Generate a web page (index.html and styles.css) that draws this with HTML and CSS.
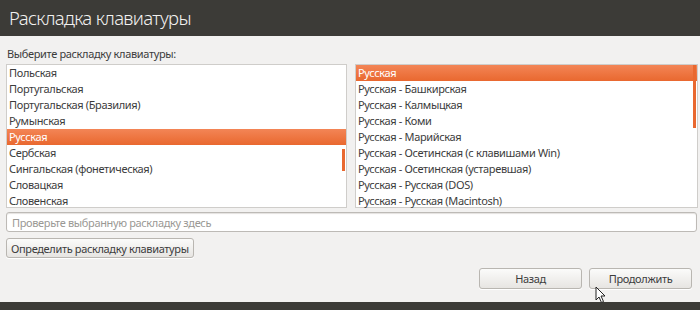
FILE: index.html
```html
<!DOCTYPE html>
<html>
    <head>
        <meta charset='UTF-8'>
        <link rel="stylesheet" href="styles.css">
    </head>
    <body>
        <header class="title-bar">Раскладка клавиатуры</header>
        <main class="page">
            <div class="caption">Выберите раскладку клавиатуры:</div>
            <div class="lists">
                <div class="list">
                    <div class="rows">
                        <div class="row">Польская</div>
                        <div class="row">Португальская</div>
                        <div class="row">Португальская (Бразилия)</div>
                        <div class="row">Румынская</div>
                        <div class="row selected">Русская</div>
                        <div class="row">Сербская</div>
                        <div class="row">Сингальская (фонетическая)</div>
                        <div class="row">Словацкая</div>
                        <div class="row">Словенская</div>
                    </div>
                    <div class="thumb thumb-left"></div>
                </div>
                <div class="list">
                    <div class="rows">
                        <div class="row selected">Русская</div>
                        <div class="row">Русская - Башкирская</div>
                        <div class="row">Русская - Калмыцкая</div>
                        <div class="row">Русская - Коми</div>
                        <div class="row">Русская - Марийская</div>
                        <div class="row">Русская - Осетинская (с клавишами Win)</div>
                        <div class="row">Русская - Осетинская (устаревшая)</div>
                        <div class="row">Русская - Русская (DOS)</div>
                        <div class="row">Русская - Русская (Macintosh)</div>
                    </div>
                    <div class="thumb thumb-right"></div>
                </div>
            </div>
            <input class="entry" type="text" placeholder="Проверьте выбранную раскладку здесь">
            <div><button class="btn detect">Определить раскладку клавиатуры</button></div>
            <div class="actions">
                <button class="btn nav">Назад</button>
                <button class="btn nav">Продолжить</button>
            </div>
        </main>
        <footer class="bottom-bar"></footer>
        <svg class="cursor" width="12" height="18" viewBox="0 0 12 18">
            <path d="M1 1 L1 14 L4 11 L6.5 16.5 L8.5 15.5 L6 10 L10 10 Z" fill="#fff" stroke="#222" stroke-width="1"/>
        </svg>
    </body>
</html>
```

FILE: styles.css
```css
html, body {
    width: 100%;
    height: 100%;
}

body {
    display: flex;
    flex-direction: column;
    margin: 0;
    padding: 0;
    background: #f2f1f0;
    font-family: 'Noto Sans', 'DejaVu Sans', sans-serif;
    font-size: 11px;
    letter-spacing: -0.35px;
    color: #3c3c3c;
    overflow: hidden;
    position: relative;
}

.title-bar {
    height: 36px;
    padding-left: 9px;
    background: #3c3b37;
    color: #f2f1f0;
    font-size: 18.5px;
    font-weight: 300;
    line-height: 35px;
    letter-spacing: -0.65px;
}

.page {
    flex: 1;
    display: flex;
    flex-direction: column;
    padding: 10px 3px 0 6px;
}

.caption {
    padding-left: 1px;
    height: 18px;
    line-height: 16px;
}

.lists {
    display: grid;
    grid-template-columns: 341px 343px;
    gap: 8px;
}

.list {
    position: relative;
    height: 142px;
    border: 1px solid #cfcdca;
    background: #fff;
}

.rows {
    display: flex;
    flex-direction: column;
}

.row {
    height: 16px;
    line-height: 16px;
    padding-left: 2px;
    white-space: nowrap;
}

.row.selected {
    background: linear-gradient(#f38556, #e9682f);
    color: #fff;
}

.thumb {
    position: absolute;
    right: 1px;
    width: 3px;
    background: #e9682f;
}

.thumb-left {
    top: 84px;
    height: 22px;
}

.thumb-right {
    top: 0;
    height: 63px;
}

.entry {
    margin-top: 4px;
    height: 20px;
    box-sizing: border-box;
    border: 1px solid #bdbab6;
    border-radius: 3px;
    padding: 0 5px;
    font-family: inherit;
    font-size: 11px;
    letter-spacing: -0.35px;
    background: #fff;
    box-shadow: inset 0 1px 1px #e4e2df;
}

.entry::placeholder {
    color: #9a9894;
}

.btn {
    font-family: inherit;
    font-size: 11px;
    letter-spacing: -0.35px;
    color: #3c3c3c;
    border: 1px solid #b9b6b1;
    border-radius: 3px;
    background: linear-gradient(#fbfbfa, #e7e5e2);
    padding: 0;
    box-shadow: 0 1px 0 #fff;
}

.detect {
    margin-top: 6px;
    height: 20px;
    padding: 0 4px;
}

.actions {
    display: flex;
    justify-content: flex-end;
    gap: 7px;
    margin-top: 10px;
    padding-right: 5px;
}

.nav {
    width: 103px;
    height: 21px;
}

.bottom-bar {
    height: 8px;
    background: #3c3b37;
}

.cursor {
    position: absolute;
    left: 595px;
    top: 286px;
}
```
